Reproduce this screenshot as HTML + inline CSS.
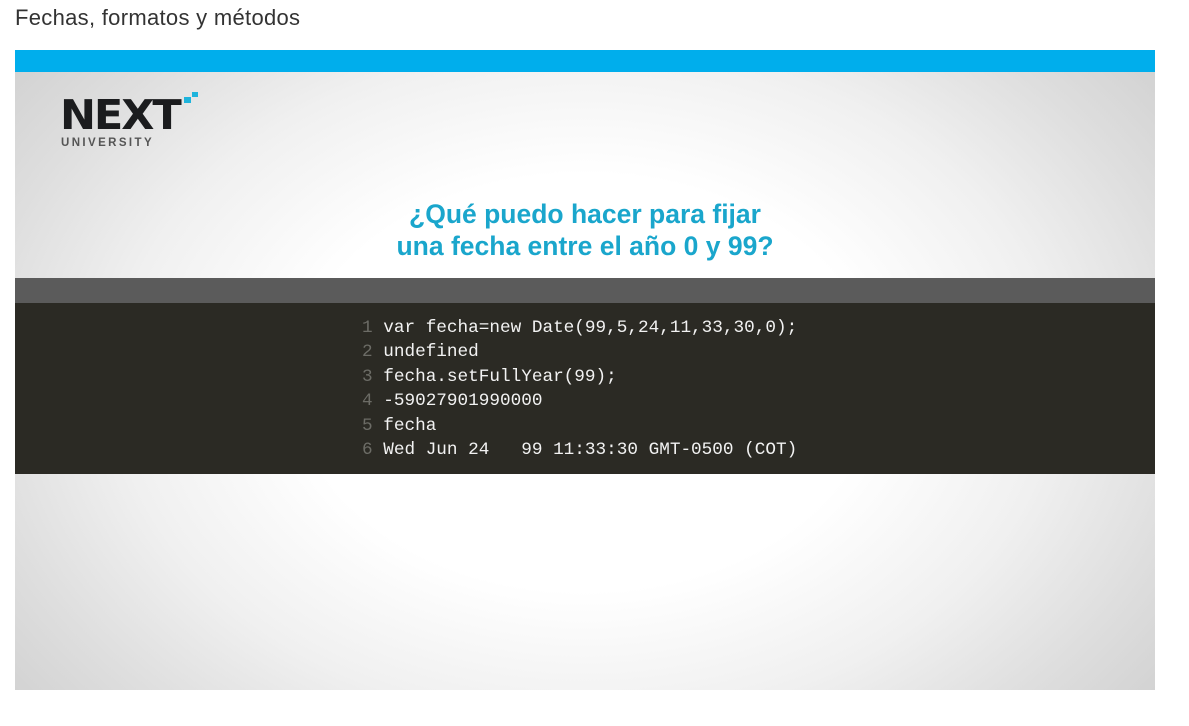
<!DOCTYPE html>
<html><head><meta charset="utf-8"><style>
html,body{margin:0;padding:0;background:#fff;width:1189px;height:726px;overflow:hidden;font-family:"Liberation Sans",sans-serif}
.t{position:absolute;left:15px;top:5px;font-size:22px;color:#333;letter-spacing:0.3px}
.f{position:absolute;left:15px;top:50px;width:1140px;height:640px;background:radial-gradient(ellipse 720px 520px at 50% 52%,#fff 40%,#f0f0f0 65%,#dedede 85%,#d2d2d2 100%);overflow:hidden}
.bar{position:absolute;left:0;top:0;width:100%;height:22px;background:#00aeec}
.logo{position:absolute;left:45px;top:45px;font-family:"DejaVu Sans",sans-serif;font-weight:bold;font-size:41px;color:#1b1c1e;letter-spacing:-2px;line-height:1;transform:scaleX(1.05);transform-origin:left top}
.uni{position:absolute;left:46px;top:87px;font-size:11.5px;font-weight:bold;color:#555;letter-spacing:2.4px}
.sq{position:absolute;background:#1eb4dc}
.h{position:absolute;left:0;width:100%;top:148px;text-align:center;font-weight:bold;font-size:26.5px;line-height:32px;color:#1aa6cc}
.g{position:absolute;left:0;top:228px;width:100%;height:25px;background:#5b5b5b}
.c{position:absolute;left:0;top:253px;width:100%;height:171px;background:#2b2a24}
pre{position:absolute;left:347px;top:13px;margin:0;font-family:"Liberation Mono",monospace;font-size:17.7px;line-height:24.4px;color:#f2f2f2}
pre span{color:#6c6c66}
</style></head><body>
<div class="t">Fechas, formatos y métodos</div>
<div class="f">
<div class="bar"></div>
<div class="logo">NEXT</div>
<div class="sq" style="left:169px;top:47px;width:7px;height:6px"></div>
<div class="sq" style="left:177px;top:42px;width:6px;height:5px"></div>
<div class="uni">UNIVERSITY</div>
<div class="h">¿Qué puedo hacer para fijar<br>una fecha entre el año 0 y 99?</div>
<div class="g"></div>
<div class="c"><pre><span>1</span> var fecha=new Date(99,5,24,11,33,30,0);
<span>2</span> undefined
<span>3</span> fecha.setFullYear(99);
<span>4</span> -59027901990000
<span>5</span> fecha
<span>6</span> Wed Jun 24   99 11:33:30 GMT-0500 (COT)</pre></div>
</div>
</body></html>
